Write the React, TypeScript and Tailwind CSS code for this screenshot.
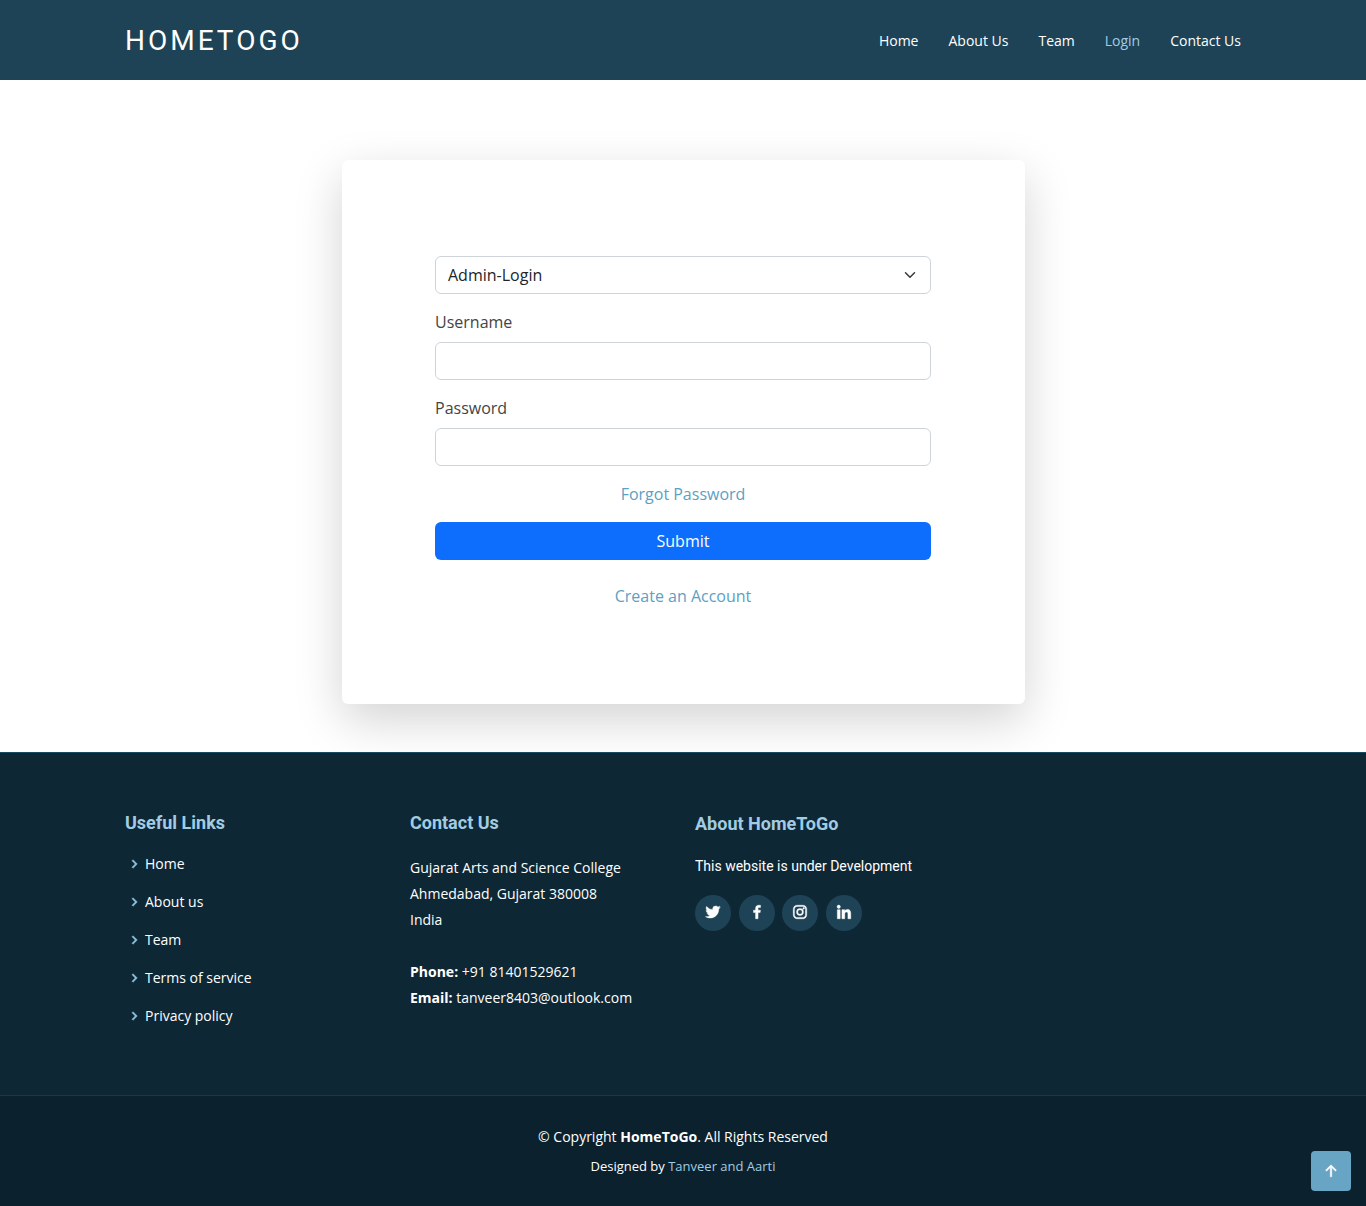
import { BiChevronRight, BiLogoTwitter, BiLogoFacebook, BiLogoInstagram, BiLogoLinkedin } from "react-icons/bi";
import { BsArrowUpShort } from "react-icons/bs";

const nav = ["Home", "About Us", "Team", "Login", "Contact Us"];
const links = ["Home", "About us", "Team", "Terms of service", "Privacy policy"];
const socials = [
  { name: "Twitter", Icon: BiLogoTwitter },
  { name: "Facebook", Icon: BiLogoFacebook },
  { name: "Instagram", Icon: BiLogoInstagram },
  { name: "LinkedIn", Icon: BiLogoLinkedin },
];

function Header() {
  return (
    <header className="h-20 bg-[#1e4356] pt-px">
      <div className="mx-auto flex h-full max-w-[1140px] items-center justify-between px-3">
        <h1 className="font-['Roboto'] text-[28px] leading-9 tracking-[3px] text-white">
          <a href="#home">HOMETOGO</a>
        </h1>
        <nav>
          <ul className="flex gap-[30px] text-sm leading-5">
            {nav.map((item) => (
              <li key={item}>
                <a href="#nav" className={item === "Login" ? "text-[#a2cce3]" : "text-white"}>
                  {item}
                </a>
              </li>
            ))}
          </ul>
        </nav>
      </div>
    </header>
  );
}

function LoginForm() {
  const field = "block h-[38px] w-full rounded-md border border-[#ced4da] bg-white px-3";
  return (
    <main className="overflow-hidden px-3 pt-20 pb-12">
      <div className="mx-auto max-w-[683px] rounded-md bg-white px-6 py-24 shadow-[0_16px_48px_rgba(0,0,0,0.175)]">
        <form className="mx-auto flex max-w-[496px] flex-col text-base leading-6 text-[#444444]">
          <div className="relative">
            <select aria-label="Login type" className={field + " appearance-none text-[#212529]"}>
              <option>Admin-Login</option>
              <option>User-Login</option>
            </select>
            <svg viewBox="0 0 16 16" className="pointer-events-none absolute top-[13px] right-[15px] h-3 w-3" fill="none" stroke="#343a40" strokeWidth="2" strokeLinecap="round" strokeLinejoin="round">
              <path d="m2 5 6 6 6-6" />
            </svg>
          </div>
          <label htmlFor="username" className="mt-4 mb-2">Username</label>
          <input id="username" type="text" className={field} />
          <label htmlFor="password" className="mt-4 mb-2">Password</label>
          <input id="password" type="password" className={field} />
          <a href="#forgot" className="mt-4 self-center text-[#5c9fc4]">Forgot Password</a>
          <button type="submit" className="mt-4 h-[38px] rounded-md bg-[#0d6efd] text-white">Submit</button>
          <a href="#register" className="mt-6 self-center text-[#5c9fc4]">Create an Account</a>
        </form>
      </div>
    </main>
  );
}

function Footer() {
  const title = "font-['Roboto'] text-lg font-bold text-[#a2cce3]";
  return (
    <footer className="bg-[#0e2735] text-sm text-white">
      <div className="border-t border-b border-t-[#17495f] border-b-[#17394a] pt-[59px] pb-[60px]">
        <div className="mx-auto grid max-w-[1140px] grid-cols-4">
          <section className="px-3">
            <h4 className={title + " leading-[22px]"}>Useful Links</h4>
            <ul className="mt-[11px]">
              {links.map((item) => (
                <li key={item} className="flex h-[38px] items-center gap-0.5">
                  <BiChevronRight className="h-[18px] w-[18px] text-[#8fc4e0]" stroke="currentColor" strokeWidth="0.6" />
                  <a href="#link" className="leading-none">{item}</a>
                </li>
              ))}
            </ul>
          </section>
          <section className="px-3">
            <h4 className={title + " leading-[22px]"}>Contact Us</h4>
            <p className="mt-[21px] leading-[26px]">
              Gujarat Arts and Science College
              <br />
              Ahmedabad, Gujarat 380008
              <br />
              India
              <br />
              <br />
              <strong>Phone:</strong> +91 81401529621
              <br />
              <strong>Email:</strong> tanveer8403@outlook.com
            </p>
          </section>
          <section className="px-3">
            <h3 className={title + " leading-6"}>About HomeToGo</h3>
            <p className="mt-[18px] font-['Roboto'] leading-6">This website is under Development</p>
            <div className="mt-[17px]">
              {socials.map(({ name, Icon }) => (
                <span key={name}>
                  <a href="#social" aria-label={name} className="mr-1 inline-grid h-9 w-9 place-items-center rounded-full bg-[#1e4356] pb-0.5 align-top">
                    <Icon className="h-[18px] w-[18px]" stroke="currentColor" strokeWidth="0.6" />
                  </a>{" "}
                </span>
              ))}
            </div>
          </section>
        </div>
      </div>
      <div className="bg-[#0b212d] py-[30px] text-center">
        <p className="leading-[21px]">
          © Copyright <strong>HomeToGo</strong>. All Rights Reserved
        </p>
        <p className="mt-[9px] text-[13px] leading-5">
          Designed by <a href="#authors" className="text-[#a2cce3]">Tanveer and Aarti</a>
        </p>
      </div>
    </footer>
  );
}

export default function App() {
  return (
    <div className="bg-white font-['Open_Sans',sans-serif]">
      <Header />
      <LoginForm />
      <Footer />
      <a href="#top" aria-label="Back to top" className="fixed right-[15px] bottom-[15px] grid h-10 w-10 place-items-center rounded bg-[#68a4c4] text-white">
        <BsArrowUpShort className="h-6 w-6" stroke="currentColor" strokeWidth="0.3" />
      </a>
    </div>
  );
}
